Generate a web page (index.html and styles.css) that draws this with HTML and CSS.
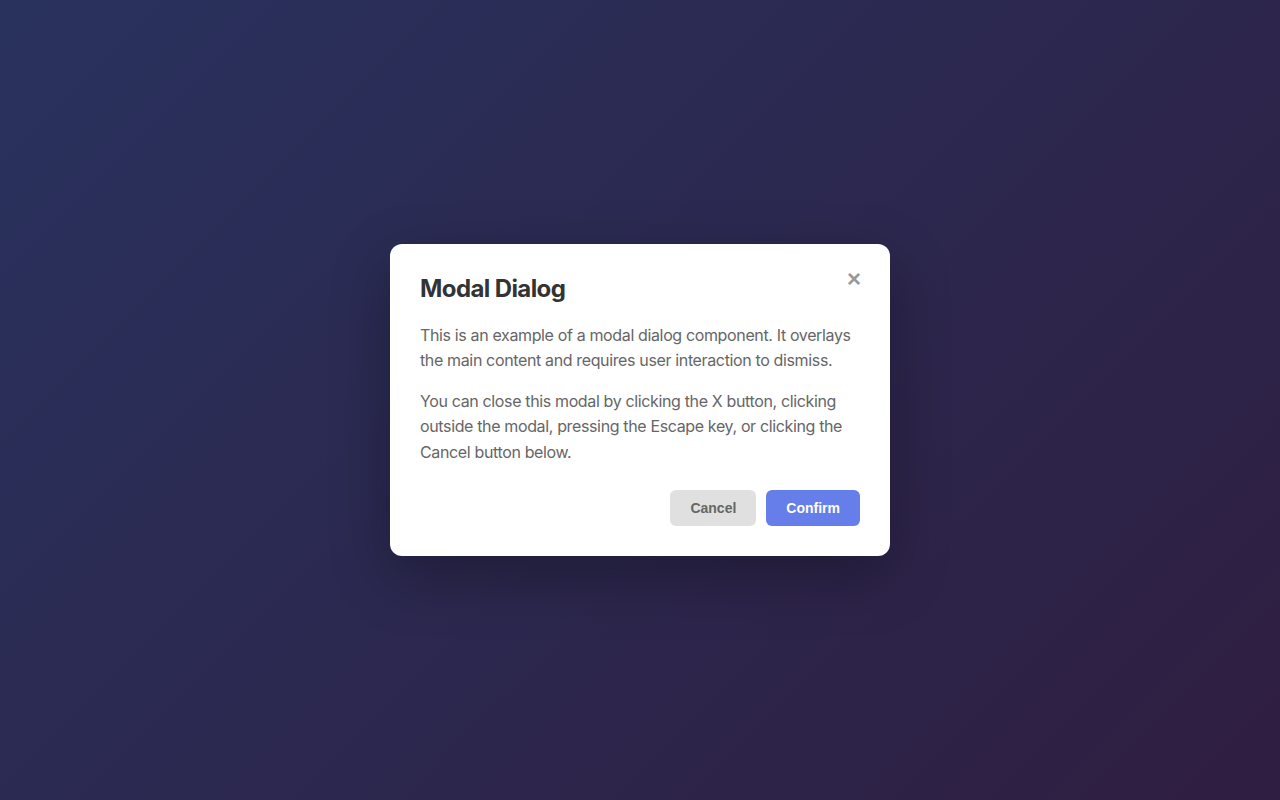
FILE: index.html
```html
<!DOCTYPE html>
<html lang="en">
<head>
<meta charset="utf-8">
<title>Modal Dialog</title>
<link rel="stylesheet" href="styles.css">
</head>
<body>
<div class="overlay">
  <div class="modal" role="dialog" aria-labelledby="modal-title">
    <button class="close" aria-label="Close">&times;</button>
    <h2 id="modal-title" class="title">Modal Dialog</h2>
    <div class="body">
      <p>This is an example of a modal dialog component. It overlays the main content and requires user interaction to dismiss.</p>
      <p>You can close this modal by clicking the X button, clicking outside the modal, pressing the Escape key, or clicking the Cancel button below.</p>
    </div>
    <div class="footer">
      <button class="btn btn-secondary">Cancel</button>
      <button class="btn btn-primary">Confirm</button>
    </div>
  </div>
</div>
</body>
</html>
```
FILE: styles.css
```css
* { box-sizing: border-box; }
html, body { margin: 0; padding: 0; height: 100%; }
body {
  font-family: Inter, "Noto Sans", sans-serif;
  background: linear-gradient(135deg, #667eea 0%, #764ba2 100%);
}
.overlay {
  height: 100%;
  background: rgba(0, 0, 0, 0.6);
  display: flex;
  align-items: center;
  justify-content: center;
}
.modal {
  position: relative;
  width: 500px;
  background: #fff;
  border-radius: 12px;
  padding: 30px;
  box-shadow: 0 20px 60px rgba(0, 0, 0, 0.3);
}
.close {
  position: absolute;
  top: 20px;
  right: 21px;
  border: 0;
  background: none;
  padding: 0 8px;
  font-family: "Liberation Sans", Arial, sans-serif;
  font-size: 24px;
  font-weight: bold;
  line-height: 30px;
  color: #999;
  cursor: pointer;
}
.title {
  margin: 0 0 20px;
  font-size: 24px;
  font-weight: 700;
  letter-spacing: -0.6px;
  color: #333;
}
.body p {
  margin: 0 0 15px;
  font-size: 16px;
  line-height: 1.6;
  letter-spacing: -0.36px;
  color: #666;
}
.footer {
  display: flex;
  justify-content: flex-end;
  gap: 10px;
  margin-top: 25px;
}
.btn {
  border: 0;
  border-radius: 6px;
  padding: 10px 20px;
  font-family: "Liberation Sans", Arial, sans-serif;
  font-size: 14px;
  font-weight: bold;
  line-height: 16px;
  cursor: pointer;
}
.btn-secondary { background: #e0e0e0; color: #666; }
.btn-primary { background: #667eea; color: #fff; }
```
